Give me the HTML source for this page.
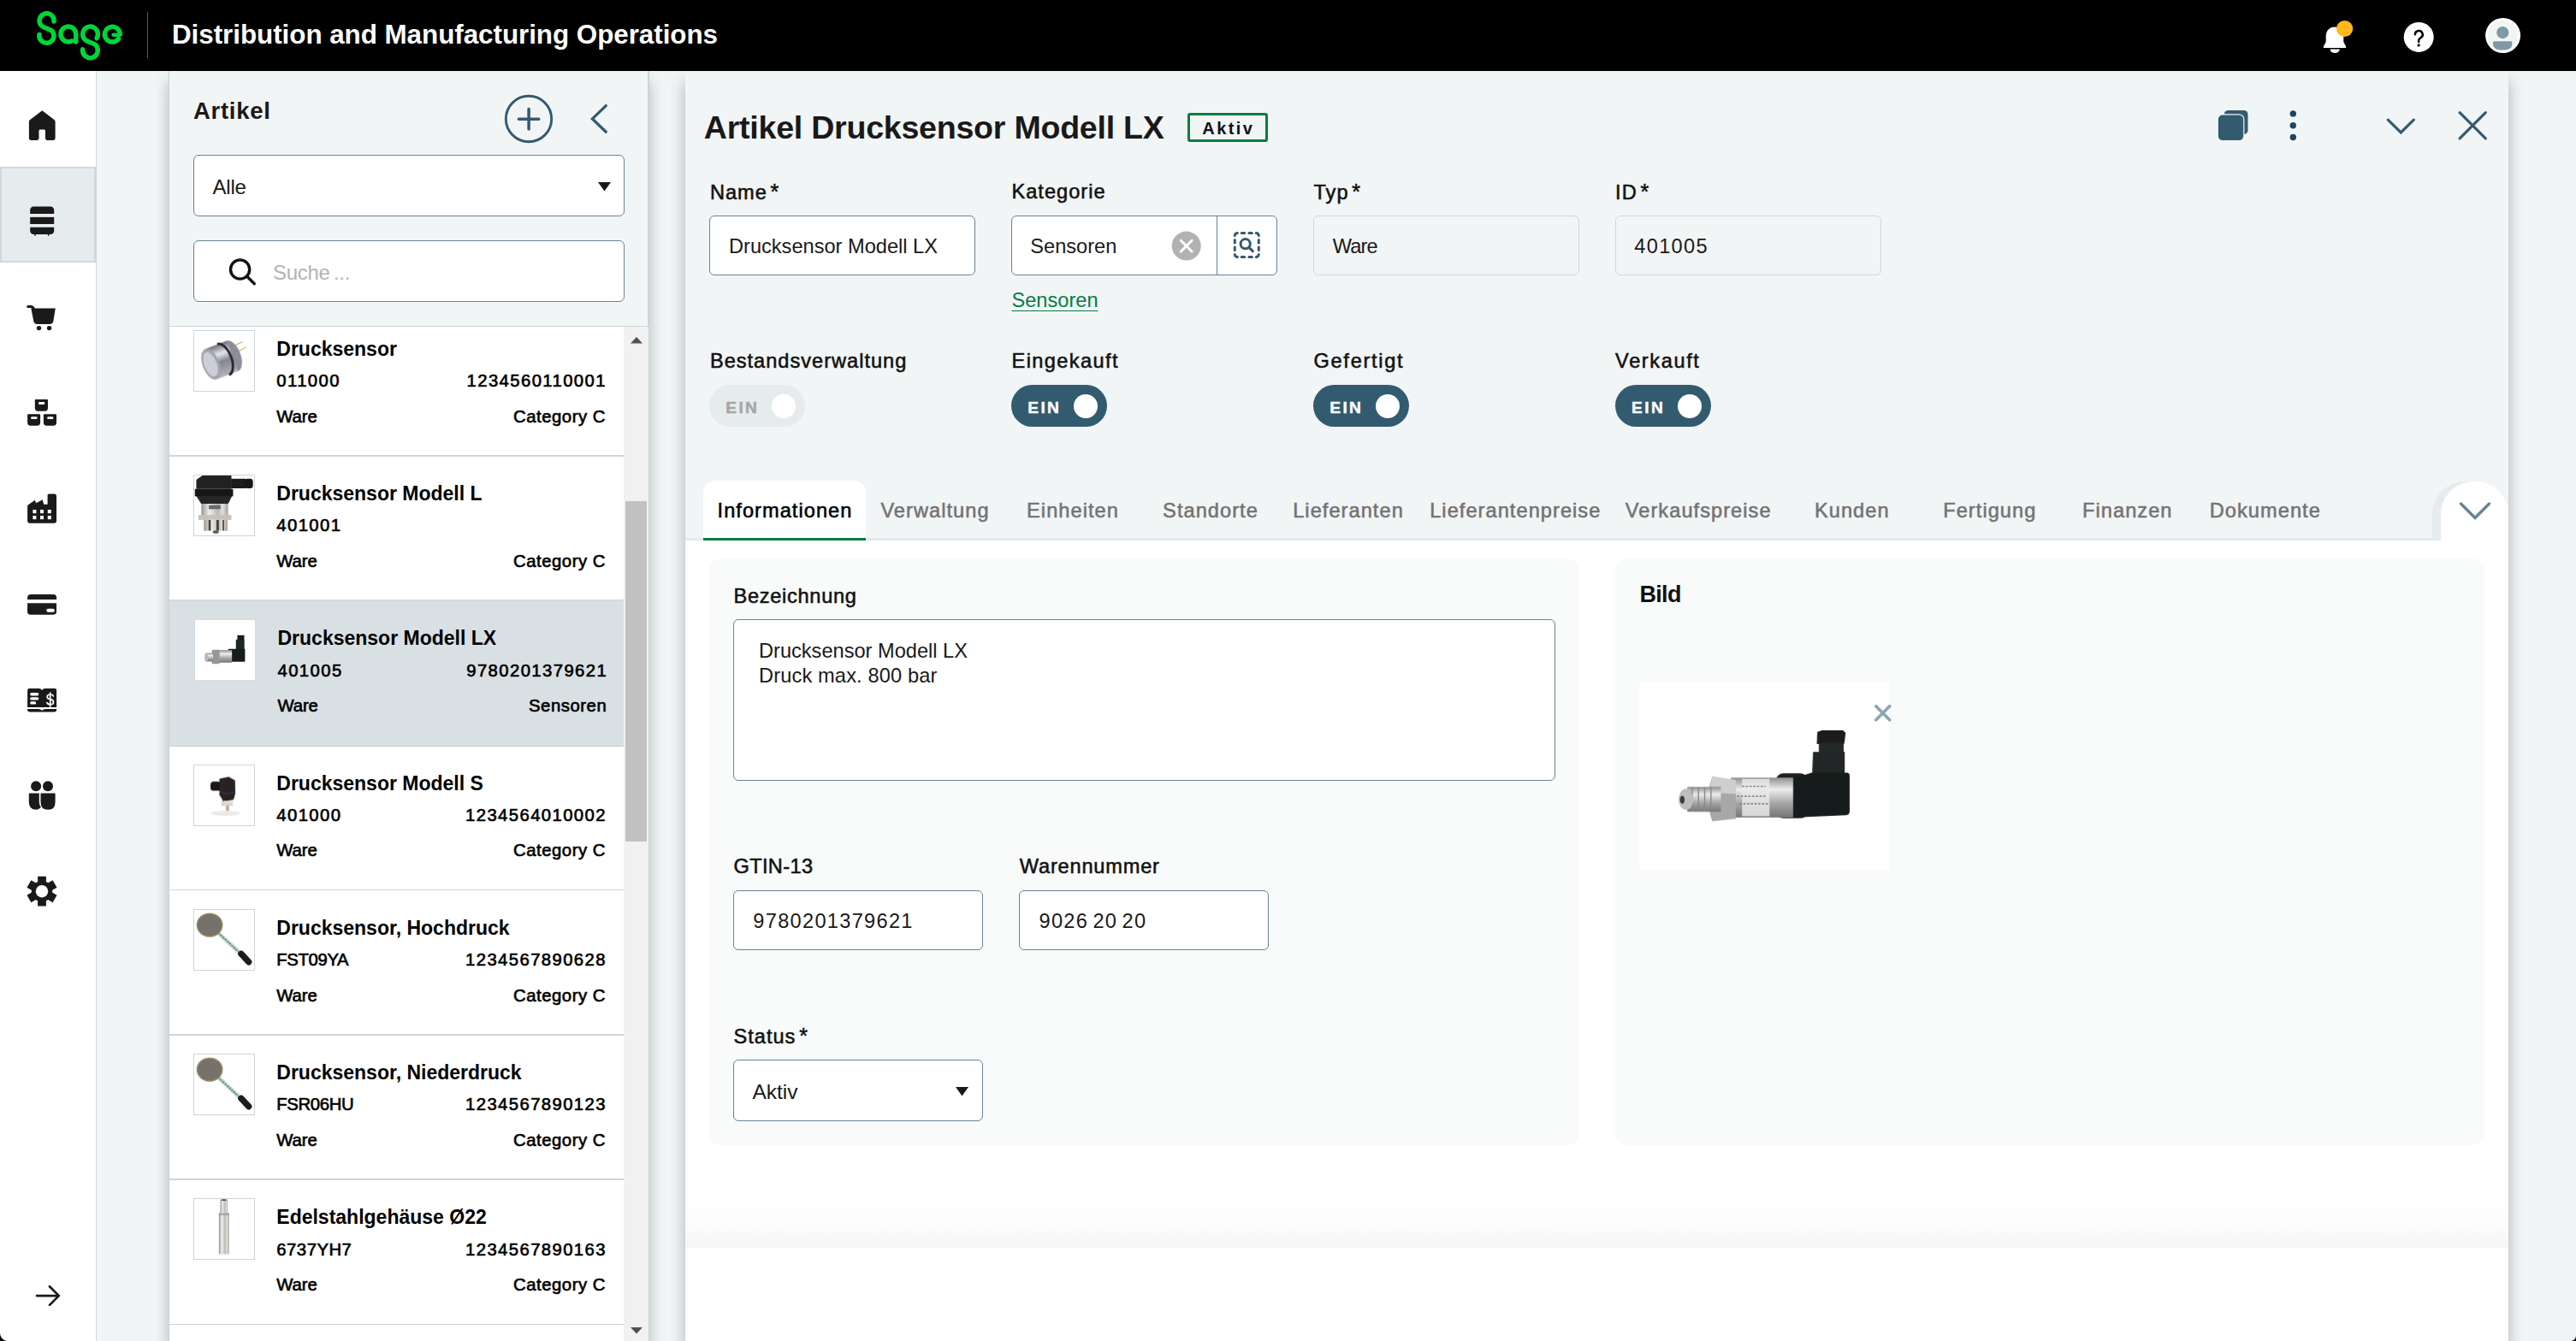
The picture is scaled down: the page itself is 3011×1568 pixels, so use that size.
<!DOCTYPE html>
<html lang="de"><head><meta charset="utf-8"><title>Artikel Drucksensor Modell LX</title>
<style>
html,body{margin:0;padding:0;}
body{width:3011px;height:1568px;overflow:hidden;background:#f2f5f6;position:relative;font-family:"Liberation Sans",sans-serif;}
.b{position:absolute;box-sizing:border-box;}
.t{position:absolute;white-space:pre;}
.inp{background:#fff;border:1.4px solid #668494;border-radius:6px;}
.dis{background:#f2f5f6;border:1.4px solid #ccd6db;border-radius:6px;}
.panel{box-shadow:0 12px 17px rgba(0,20,29,0.3);}
</style></head>
<body>
<svg width="0" height="0" style="position:absolute"><defs>
<linearGradient id="gm" x1="0" y1="0" x2="0" y2="1"><stop offset="0" stop-color="#6e6e79"/><stop offset=".3" stop-color="#e4e4ea"/><stop offset=".55" stop-color="#85858f"/><stop offset="1" stop-color="#b4b4be"/></linearGradient>
<linearGradient id="gs" x1="0" y1="0" x2="1" y2="0"><stop offset="0" stop-color="#9a9792"/><stop offset=".3" stop-color="#efeeec"/><stop offset=".62" stop-color="#bcb9b4"/><stop offset=".8" stop-color="#e3e1de"/><stop offset="1" stop-color="#a19e99"/></linearGradient>
<linearGradient id="gv" x1="0" y1="0" x2="0" y2="1"><stop offset="0" stop-color="#8f8f8f"/><stop offset=".3" stop-color="#ededed"/><stop offset=".65" stop-color="#a5a5a5"/><stop offset="1" stop-color="#777"/></linearGradient>
<filter id="bl"><feGaussianBlur stdDeviation="6"/></filter><filter id="bl2"><feGaussianBlur stdDeviation="1.2"/></filter>
</defs></svg>
<div class="b " style="left:0.00px;top:83.00px;width:113.00px;height:1485.00px;background:#fff;border-right:1.4px solid #ccd6db;"></div>
<div class="b " style="left:0.00px;top:195.00px;width:112.30px;height:112.00px;background:#e6ebed;border:2px solid #cfd8dd;"></div>
<div class="b panel" style="left:198.00px;top:83.00px;width:560.00px;height:1485.00px;background:#f2f5f6;"></div>
<div class="b " style="left:197.20px;top:83.00px;width:1.20px;height:1485.00px;background:#c9d2d8;"></div>
<div class="b " style="left:757.40px;top:83.00px;width:1.20px;height:1485.00px;background:#ccd4da;"></div>
<div class="b " style="left:198.00px;top:381.00px;width:560.00px;height:1187.00px;background:#fff;border-top:1.4px solid #ccd6db;"></div>
<div class="t" style="top:115.72px;font-size:27.5px;line-height:27.5px;color:#191919;font-weight:bold;letter-spacing:0.7px;left:226.00px;">Artikel</div>
<div class="b inp" style="left:226.00px;top:181.00px;width:504.00px;height:72.00px;"></div>
<div class="t" style="top:206.68px;font-size:24px;line-height:24px;color:#191919;letter-spacing:-0.2px;left:248.50px;">Alle</div>
<svg class="b" style="left:698.5px;top:212.5px" width="15" height="11" viewBox="0 0 15 11"><path d="M0 0H15L7.5 10.5Z" fill="#191919"/></svg>
<div class="b inp" style="left:226.00px;top:281.00px;width:504.00px;height:72.00px;"></div>
<div class="t" style="top:307.18px;font-size:24px;line-height:24px;color:#b3b3b3;letter-spacing:-0.3px;left:319.00px;word-spacing:-2px;">Suche ...</div>
<div class="b" style="left:198px;top:382.4px;width:531px;height:1186px;overflow:hidden;">
<div class="b " style="left:0.00px;top:149.80px;width:531.00px;height:1.40px;background:#ccd6db;"></div>
<div class="b th" style="left:28.00px;top:3.60px;width:72.00px;height:72.00px;background:#fff;overflow:hidden;border:1.2px solid #ccd6db;"><svg width="69.600" height="69.600" viewBox="93 92 1067 1068" style="display:block"><g transform="rotate(-21 570 620)" filter="url(#bl)">
<line x1="830" y1="470" x2="1050" y2="445" stroke="#c9a24a" stroke-width="16"/><line x1="830" y1="600" x2="1075" y2="560" stroke="#c9a24a" stroke-width="16"/>
<ellipse cx="790" cy="620" rx="150" ry="290" fill="#8d8d97"/>
<rect x="380" y="330" width="410" height="580" fill="url(#gm)"/>
<path d="M615 326A150 294 0 0 1 615 914" fill="none" stroke="#23262a" stroke-width="46"/>
<ellipse cx="380" cy="620" rx="150" ry="290" fill="#a4a4ae"/><ellipse cx="372" cy="620" rx="112" ry="228" fill="#cdced8"/>
</g></svg></div>
<div class="t" style="top:14.33px;font-size:23px;line-height:23px;color:#000;font-weight:bold;left:125.30px;">Drucksensor</div>
<div class="t" style="top:52.62px;font-size:20.3px;line-height:20.3px;color:#000;letter-spacing:1.4px;-webkit-text-stroke:0.65px #000;left:125.30px;">011000</div>
<div class="t" style="top:94.22px;font-size:20.3px;line-height:20.3px;color:#000;letter-spacing:-0.1px;-webkit-text-stroke:0.65px #000;left:125.30px;">Ware</div>
<div class="t" style="top:52.62px;font-size:20.3px;line-height:20.3px;color:#000;letter-spacing:1.4px;-webkit-text-stroke:0.65px #000;right:20.10px;text-align:right;">1234560110001</div>
<div class="t" style="top:94.22px;font-size:20.3px;line-height:20.3px;color:#000;letter-spacing:0.55px;-webkit-text-stroke:0.65px #000;right:20.95px;text-align:right;">Category C</div>
<div class="b " style="left:0.00px;top:319.10px;width:531.00px;height:1.40px;background:#ccd6db;"></div>
<div class="b th" style="left:28.00px;top:172.90px;width:72.00px;height:72.00px;background:#fff;overflow:hidden;border:1.2px solid #ccd6db;"><svg width="69.600" height="69.600" viewBox="93 92 1067 1068" style="display:block"><g filter="url(#bl)">
<path d="M130 170L240 92H760V335H130Z" fill="#202020"/><rect x="755" y="150" width="260" height="172" fill="#1b1b1b"/><rect x="1000" y="148" width="146" height="176" rx="50" fill="#131313"/>
<rect x="105" y="335" width="685" height="130" fill="#161616"/><path d="M130 460H772L700 602H220Z" fill="#252525"/>
<rect x="220" y="600" width="480" height="205" fill="url(#gs)"/><rect x="355" y="625" width="210" height="70" fill="#6a6a6a"/>
<rect x="170" y="800" width="590" height="88" fill="#c7c1b8"/>
<rect x="265" y="885" width="425" height="200" fill="url(#gs)"/><rect x="350" y="890" width="40" height="190" fill="#4a433e"/><rect x="490" y="890" width="45" height="190" fill="#4a433e"/><rect x="600" y="890" width="30" height="190" fill="#5a534e"/>
<ellipse cx="480" cy="1105" rx="55" ry="28" fill="#5a5552"/></g></svg></div>
<div class="t" style="top:183.63px;font-size:23px;line-height:23px;color:#000;font-weight:bold;left:125.30px;">Drucksensor Modell L</div>
<div class="t" style="top:221.92px;font-size:20.3px;line-height:20.3px;color:#000;letter-spacing:1.4px;-webkit-text-stroke:0.65px #000;left:125.30px;">401001</div>
<div class="t" style="top:263.52px;font-size:20.3px;line-height:20.3px;color:#000;letter-spacing:-0.1px;-webkit-text-stroke:0.65px #000;left:125.30px;">Ware</div>
<div class="t" style="top:263.52px;font-size:20.3px;line-height:20.3px;color:#000;letter-spacing:0.55px;-webkit-text-stroke:0.65px #000;right:20.95px;text-align:right;">Category C</div>
<div class="b " style="left:0.00px;top:320.10px;width:531.00px;height:170.30px;background:#d9e0e4;border-bottom:1.4px solid #c4cfd5;"></div>
<div class="b th" style="left:29.20px;top:342.10px;width:72.00px;height:72.00px;background:#fff;overflow:hidden;border:1.2px solid #d3dbe0;"><svg width="69.600" height="69.600" viewBox="112 68 1053 1054" style="display:block"><g filter="url(#bl)">
<rect x="860" y="335" width="122" height="95" rx="10" fill="#1a1f1e"/><rect x="835" y="415" width="150" height="215" fill="#1f2726"/>
<rect x="700" y="580" width="296" height="228" rx="12" fill="#181d1c"/>
<rect x="530" y="600" width="235" height="222" fill="url(#gv)"/>
<rect x="410" y="595" width="135" height="248" rx="14" fill="#97979a"/>
<rect x="300" y="652" width="130" height="150" fill="url(#gv)"/><ellipse cx="312" cy="727" rx="32" ry="72" fill="#b9b9bd"/></g></svg></div>
<div class="t" style="top:352.83px;font-size:23px;line-height:23px;color:#000;font-weight:bold;left:126.50px;">Drucksensor Modell LX</div>
<div class="t" style="top:391.12px;font-size:20.3px;line-height:20.3px;color:#000;letter-spacing:1.4px;-webkit-text-stroke:0.65px #000;left:126.50px;">401005</div>
<div class="t" style="top:432.72px;font-size:20.3px;line-height:20.3px;color:#000;letter-spacing:-0.1px;-webkit-text-stroke:0.65px #000;left:126.50px;">Ware</div>
<div class="t" style="top:391.12px;font-size:20.3px;line-height:20.3px;color:#000;letter-spacing:1.4px;-webkit-text-stroke:0.65px #000;right:18.90px;text-align:right;">9780201379621</div>
<div class="t" style="top:432.72px;font-size:20.3px;line-height:20.3px;color:#000;letter-spacing:0.55px;-webkit-text-stroke:0.65px #000;right:19.75px;text-align:right;">Sensoren</div>
<div class="b " style="left:0.00px;top:657.60px;width:531.00px;height:1.40px;background:#ccd6db;"></div>
<div class="b th" style="left:28.00px;top:511.40px;width:72.00px;height:72.00px;background:#fff;overflow:hidden;border:1.2px solid #ccd6db;"><svg width="69.600" height="69.600" viewBox="93 92 1067 1068" style="display:block"><g filter="url(#bl)">
<ellipse cx="650" cy="950" rx="260" ry="45" fill="#b39d92" opacity=".22"/>
<rect x="582" y="690" width="205" height="130" fill="#ddd6ce"/><rect x="662" y="815" width="56" height="92" fill="#b8a9a0"/>
<rect x="385" y="382" width="190" height="165" rx="60" fill="#1c1817"/>
<path d="M545 330L712 296L826 362L830 600L800 702L622 742L545 622Z" fill="#2a2422"/>
<path d="M545 545Q640 625 826 578" fill="none" stroke="#2746b0" stroke-width="9"/>
<rect x="625" y="725" width="150" height="30" fill="#e8e4e0"/></g></svg></div>
<div class="t" style="top:522.13px;font-size:23px;line-height:23px;color:#000;font-weight:bold;left:125.30px;">Drucksensor Modell S</div>
<div class="t" style="top:560.42px;font-size:20.3px;line-height:20.3px;color:#000;letter-spacing:1.4px;-webkit-text-stroke:0.65px #000;left:125.30px;">401000</div>
<div class="t" style="top:602.02px;font-size:20.3px;line-height:20.3px;color:#000;letter-spacing:-0.1px;-webkit-text-stroke:0.65px #000;left:125.30px;">Ware</div>
<div class="t" style="top:560.42px;font-size:20.3px;line-height:20.3px;color:#000;letter-spacing:1.4px;-webkit-text-stroke:0.65px #000;right:20.10px;text-align:right;">1234564010002</div>
<div class="t" style="top:602.02px;font-size:20.3px;line-height:20.3px;color:#000;letter-spacing:0.55px;-webkit-text-stroke:0.65px #000;right:20.95px;text-align:right;">Category C</div>
<div class="b " style="left:0.00px;top:826.80px;width:531.00px;height:1.40px;background:#ccd6db;"></div>
<div class="b th" style="left:28.00px;top:680.60px;width:72.00px;height:72.00px;background:#fff;overflow:hidden;border:1.2px solid #ccd6db;"><svg width="69.600" height="69.600" viewBox="93 92 1067 1068" style="display:block"><g filter="url(#bl)">
<line x1="520" y1="500" x2="935" y2="885" stroke="#bfe0d7" stroke-width="78"/><line x1="520" y1="500" x2="905" y2="858" stroke="#6b6b66" stroke-width="22" stroke-dasharray="40 14"/>
<ellipse cx="370" cy="362" rx="228" ry="208" fill="#75726c" stroke="#a69466" stroke-width="20"/>
<line x1="935" y1="880" x2="1070" y2="1025" stroke="#1b1b1b" stroke-width="112" stroke-linecap="round"/></g></svg></div>
<div class="t" style="top:691.33px;font-size:23px;line-height:23px;color:#000;font-weight:bold;left:125.30px;">Drucksensor, Hochdruck</div>
<div class="t" style="top:729.62px;font-size:20.3px;line-height:20.3px;color:#000;letter-spacing:-0.35px;-webkit-text-stroke:0.65px #000;left:125.30px;">FST09YA</div>
<div class="t" style="top:771.22px;font-size:20.3px;line-height:20.3px;color:#000;letter-spacing:-0.1px;-webkit-text-stroke:0.65px #000;left:125.30px;">Ware</div>
<div class="t" style="top:729.62px;font-size:20.3px;line-height:20.3px;color:#000;letter-spacing:1.4px;-webkit-text-stroke:0.65px #000;right:20.10px;text-align:right;">1234567890628</div>
<div class="t" style="top:771.22px;font-size:20.3px;line-height:20.3px;color:#000;letter-spacing:0.55px;-webkit-text-stroke:0.65px #000;right:20.95px;text-align:right;">Category C</div>
<div class="b " style="left:0.00px;top:996.10px;width:531.00px;height:1.40px;background:#ccd6db;"></div>
<div class="b th" style="left:28.00px;top:849.90px;width:72.00px;height:72.00px;background:#fff;overflow:hidden;border:1.2px solid #ccd6db;"><svg width="69.600" height="69.600" viewBox="93 92 1067 1068" style="display:block"><g filter="url(#bl)">
<line x1="520" y1="500" x2="935" y2="885" stroke="#bfe0d7" stroke-width="78"/><line x1="520" y1="500" x2="905" y2="858" stroke="#6b6b66" stroke-width="22" stroke-dasharray="40 14"/>
<ellipse cx="370" cy="362" rx="228" ry="208" fill="#75726c" stroke="#a69466" stroke-width="20"/>
<line x1="935" y1="880" x2="1070" y2="1025" stroke="#1b1b1b" stroke-width="112" stroke-linecap="round"/></g></svg></div>
<div class="t" style="top:860.63px;font-size:23px;line-height:23px;color:#000;font-weight:bold;left:125.30px;">Drucksensor, Niederdruck</div>
<div class="t" style="top:898.92px;font-size:20.3px;line-height:20.3px;color:#000;letter-spacing:-0.35px;-webkit-text-stroke:0.65px #000;left:125.30px;">FSR06HU</div>
<div class="t" style="top:940.52px;font-size:20.3px;line-height:20.3px;color:#000;letter-spacing:-0.1px;-webkit-text-stroke:0.65px #000;left:125.30px;">Ware</div>
<div class="t" style="top:898.92px;font-size:20.3px;line-height:20.3px;color:#000;letter-spacing:1.4px;-webkit-text-stroke:0.65px #000;right:20.10px;text-align:right;">1234567890123</div>
<div class="t" style="top:940.52px;font-size:20.3px;line-height:20.3px;color:#000;letter-spacing:0.55px;-webkit-text-stroke:0.65px #000;right:20.95px;text-align:right;">Category C</div>
<div class="b " style="left:0.00px;top:1165.30px;width:531.00px;height:1.40px;background:#ccd6db;"></div>
<div class="b th" style="left:28.00px;top:1019.10px;width:72.00px;height:72.00px;background:#fff;overflow:hidden;border:1.2px solid #ccd6db;"><svg width="69.600" height="69.600" viewBox="93 92 1067 1068" style="display:block"><g filter="url(#bl)">
<rect x="560" y="100" width="132" height="255" fill="url(#gs)"/><ellipse cx="626" cy="108" rx="50" ry="14" fill="#3b3b3b"/>
<rect x="535" y="345" width="182" height="735" rx="8" fill="url(#gs)"/><rect x="535" y="345" width="182" height="40" fill="#8b8580" opacity=".55"/></g></svg></div>
<div class="t" style="top:1029.83px;font-size:23px;line-height:23px;color:#000;font-weight:bold;left:125.30px;">Edelstahlgehäuse Ø22</div>
<div class="t" style="top:1068.12px;font-size:20.3px;line-height:20.3px;color:#000;letter-spacing:0.5px;-webkit-text-stroke:0.65px #000;left:125.30px;">6737YH7</div>
<div class="t" style="top:1109.72px;font-size:20.3px;line-height:20.3px;color:#000;letter-spacing:-0.1px;-webkit-text-stroke:0.65px #000;left:125.30px;">Ware</div>
<div class="t" style="top:1068.12px;font-size:20.3px;line-height:20.3px;color:#000;letter-spacing:1.4px;-webkit-text-stroke:0.65px #000;right:20.10px;text-align:right;">1234567890163</div>
<div class="t" style="top:1109.72px;font-size:20.3px;line-height:20.3px;color:#000;letter-spacing:0.55px;-webkit-text-stroke:0.65px #000;right:20.95px;text-align:right;">Category C</div>
<div class="b " style="left:0.00px;top:1334.60px;width:531.00px;height:1.40px;background:#ccd6db;"></div>
</div>
<div class="b " style="left:729.20px;top:382.40px;width:28.80px;height:1185.60px;background:#f1f1f1;"></div>
<div class="b " style="left:731.20px;top:586.00px;width:24.80px;height:398.00px;background:#c1c1c1;"></div>
<svg class="b" style="left:737px;top:394px" width="14" height="8" viewBox="0 0 14 8"><path d="M0 7.5L7 0L14 7.5Z" fill="#505050"/></svg>
<svg class="b" style="left:737px;top:1551.5px" width="14" height="8" viewBox="0 0 14 8"><path d="M0 0H14L7 7.5Z" fill="#505050"/></svg>
<div class="b panel" style="left:801.00px;top:83.00px;width:2131.00px;height:1485.00px;background:#fff;"></div>
<div class="b " style="left:801.00px;top:83.00px;width:2131.00px;height:549.00px;background:#f2f5f6;border-bottom:3.6px solid #e4e8eb;"></div>
<div class="t" style="top:130.77px;font-size:37.6px;line-height:37.6px;color:#191919;font-weight:bold;letter-spacing:-0.25px;left:822.80px;">Artikel Drucksensor Modell LX</div>
<div class="b " style="left:1388.30px;top:132.40px;width:94.00px;height:33.60px;border:3px solid #007e42;border-radius:3px;"></div>
<div class="t" style="top:140.37px;font-size:20px;line-height:20px;color:#111;font-weight:bold;letter-spacing:2.4px;left:1405.30px;">Aktiv</div>
<div class="t" style="top:212.92px;font-size:23.6px;line-height:23.6px;color:#111;letter-spacing:1.0px;-webkit-text-stroke:0.55px #111;left:829.90px;">Name <span style="margin-left:-3.800px;font-size:25px;position:relative;top:0.500px">*</span></div>
<div class="t" style="top:212.92px;font-size:23.6px;line-height:23.6px;color:#111;letter-spacing:1.0px;-webkit-text-stroke:0.55px #111;left:1182.50px;">Kategorie</div>
<div class="t" style="top:212.92px;font-size:23.6px;line-height:23.6px;color:#111;letter-spacing:1.0px;-webkit-text-stroke:0.55px #111;left:1535.50px;">Typ <span style="margin-left:-3.800px;font-size:25px;position:relative;top:0.500px">*</span></div>
<div class="t" style="top:212.92px;font-size:23.6px;line-height:23.6px;color:#111;letter-spacing:1.0px;-webkit-text-stroke:0.55px #111;left:1888.10px;">ID <span style="margin-left:-3.800px;font-size:25px;position:relative;top:0.500px">*</span></div>
<div class="b inp" style="left:829.30px;top:252.40px;width:310.60px;height:69.60px;"></div>
<div class="t" style="top:276.92px;font-size:23.6px;line-height:23.6px;color:#191919;left:852.00px;">Drucksensor Modell LX</div>
<div class="b inp" style="left:1182.30px;top:252.40px;width:310.60px;height:69.60px;"></div>
<div class="b " style="left:1422.00px;top:253.00px;width:1.40px;height:68.40px;background:#668494;"></div>
<div class="t" style="top:276.92px;font-size:23.6px;line-height:23.6px;color:#191919;left:1204.30px;">Sensoren</div>
<div class="b dis" style="left:1535.30px;top:252.40px;width:310.60px;height:69.60px;"></div>
<div class="t" style="top:276.92px;font-size:23.6px;line-height:23.6px;color:#191919;letter-spacing:-0.9px;left:1557.80px;">Ware</div>
<div class="b dis" style="left:1888.00px;top:252.40px;width:310.60px;height:69.60px;"></div>
<div class="t" style="top:276.92px;font-size:23.6px;line-height:23.6px;color:#191919;letter-spacing:1.3px;left:1910.30px;">401005</div>
<div class="t" style="top:340.42px;font-size:23.6px;line-height:23.6px;color:#007e45;left:1182.50px;text-decoration:underline;text-underline-offset:4px;text-decoration-thickness:1.2px;">Sensoren</div>
<div class="t" style="top:411.42px;font-size:23.6px;line-height:23.6px;color:#111;letter-spacing:1.0px;-webkit-text-stroke:0.55px #111;left:829.90px;">Bestandsverwaltung</div>
<div class="t" style="top:411.42px;font-size:23.6px;line-height:23.6px;color:#111;letter-spacing:1.4px;-webkit-text-stroke:0.55px #111;left:1182.50px;">Eingekauft</div>
<div class="t" style="top:411.42px;font-size:23.6px;line-height:23.6px;color:#111;letter-spacing:1.7px;-webkit-text-stroke:0.55px #111;left:1535.50px;">Gefertigt</div>
<div class="t" style="top:411.42px;font-size:23.6px;line-height:23.6px;color:#111;letter-spacing:1.6px;-webkit-text-stroke:0.55px #111;left:1888.10px;">Verkauft</div>
<div class="b " style="left:829.20px;top:450.00px;width:112.00px;height:49.00px;background:#e6ebed;border-radius:25px;"></div>
<div class="t" style="top:466.95px;font-size:19.2px;line-height:19.2px;color:#a6a6a6;font-weight:bold;letter-spacing:2.4px;-webkit-text-stroke:0.45px #a6a6a6;left:848.20px;">EIN</div>
<div class="b " style="left:901.80px;top:461.00px;width:28.20px;height:28.20px;background:#fff;border-radius:50%;"></div>
<div class="b " style="left:1182.20px;top:450.00px;width:112.00px;height:49.00px;background:#335b70;border-radius:25px;"></div>
<div class="t" style="top:466.95px;font-size:19.2px;line-height:19.2px;color:#fff;font-weight:bold;letter-spacing:2.4px;-webkit-text-stroke:0.45px #fff;left:1201.20px;">EIN</div>
<div class="b " style="left:1254.80px;top:461.00px;width:28.20px;height:28.20px;background:#fff;border-radius:50%;"></div>
<div class="b " style="left:1535.20px;top:450.00px;width:112.00px;height:49.00px;background:#335b70;border-radius:25px;"></div>
<div class="t" style="top:466.95px;font-size:19.2px;line-height:19.2px;color:#fff;font-weight:bold;letter-spacing:2.4px;-webkit-text-stroke:0.45px #fff;left:1554.20px;">EIN</div>
<div class="b " style="left:1607.80px;top:461.00px;width:28.20px;height:28.20px;background:#fff;border-radius:50%;"></div>
<div class="b " style="left:1888.00px;top:450.00px;width:112.00px;height:49.00px;background:#335b70;border-radius:25px;"></div>
<div class="t" style="top:466.95px;font-size:19.2px;line-height:19.2px;color:#fff;font-weight:bold;letter-spacing:2.4px;-webkit-text-stroke:0.45px #fff;left:1907.00px;">EIN</div>
<div class="b " style="left:1960.60px;top:461.00px;width:28.20px;height:28.20px;background:#fff;border-radius:50%;"></div>
<div class="b " style="left:822.00px;top:562.20px;width:190.00px;height:70.00px;background:#fff;border-radius:13px 13px 0 0;border-bottom:3.4px solid #007e42;"></div>
<div class="t" style="left:822px;width:190px;text-align:center;top:586.02px;font-size:23.6px;line-height:23.6px;color:#000;letter-spacing:1.05px;-webkit-text-stroke:0.55px #000;padding-left:1px;box-sizing:border-box;">Informationen</div>
<div class="t" style="left:1012px;width:161px;text-align:center;top:586.02px;font-size:23.6px;line-height:23.6px;color:#737373;letter-spacing:1.05px;-webkit-text-stroke:0.55px #737373;padding-left:1px;box-sizing:border-box;">Verwaltung</div>
<div class="t" style="left:1173px;width:161px;text-align:center;top:586.02px;font-size:23.6px;line-height:23.6px;color:#737373;letter-spacing:1.05px;-webkit-text-stroke:0.55px #737373;padding-left:1px;box-sizing:border-box;">Einheiten</div>
<div class="t" style="left:1334px;width:161px;text-align:center;top:586.02px;font-size:23.6px;line-height:23.6px;color:#737373;letter-spacing:1.05px;-webkit-text-stroke:0.55px #737373;padding-left:1px;box-sizing:border-box;">Standorte</div>
<div class="t" style="left:1495px;width:161px;text-align:center;top:586.02px;font-size:23.6px;line-height:23.6px;color:#737373;letter-spacing:1.05px;-webkit-text-stroke:0.55px #737373;padding-left:1px;box-sizing:border-box;">Lieferanten</div>
<div class="t" style="left:1656px;width:229.6px;text-align:center;top:586.02px;font-size:23.6px;line-height:23.6px;color:#737373;letter-spacing:1.05px;-webkit-text-stroke:0.55px #737373;padding-left:1px;box-sizing:border-box;">Lieferantenpreise</div>
<div class="t" style="left:1885.6px;width:198.2px;text-align:center;top:586.02px;font-size:23.6px;line-height:23.6px;color:#737373;letter-spacing:1.05px;-webkit-text-stroke:0.55px #737373;padding-left:1px;box-sizing:border-box;">Verkaufspreise</div>
<div class="t" style="left:2083.8px;width:161px;text-align:center;top:586.02px;font-size:23.6px;line-height:23.6px;color:#737373;letter-spacing:1.05px;-webkit-text-stroke:0.55px #737373;padding-left:1px;box-sizing:border-box;">Kunden</div>
<div class="t" style="left:2244.8px;width:161px;text-align:center;top:586.02px;font-size:23.6px;line-height:23.6px;color:#737373;letter-spacing:1.05px;-webkit-text-stroke:0.55px #737373;padding-left:1px;box-sizing:border-box;">Fertigung</div>
<div class="t" style="left:2405.8px;width:161px;text-align:center;top:586.02px;font-size:23.6px;line-height:23.6px;color:#737373;letter-spacing:1.05px;-webkit-text-stroke:0.55px #737373;padding-left:1px;box-sizing:border-box;">Finanzen</div>
<div class="t" style="left:2566.8px;width:161px;text-align:center;top:586.02px;font-size:23.6px;line-height:23.6px;color:#737373;letter-spacing:1.05px;-webkit-text-stroke:0.55px #737373;padding-left:1px;box-sizing:border-box;">Dokumente</div>
<div class="b " style="left:2842.50px;top:562.80px;width:84.00px;height:69.00px;background:#e6ebed;border-radius:38px 38px 0 0;"></div>
<div class="b " style="left:2853.30px;top:562.80px;width:78.70px;height:69.00px;background:#fff;border-radius:38px 38px 0 0;"></div>
<svg class="b" style="left:2872px;top:584px" width="42" height="28" viewBox="0 0 42 28"><path d="M4.5 5L21 21.5L37.5 5" fill="none" stroke="#668494" stroke-width="3.4" stroke-linecap="round" stroke-linejoin="miter"/></svg>
<div class="b " style="left:828.70px;top:653.00px;width:1017.00px;height:686.00px;background:#f9fbfb;border-radius:14px;"></div>
<div class="b " style="left:1888.10px;top:653.00px;width:1016.00px;height:686.00px;background:#f9fbfb;border-radius:14px;"></div>
<div class="t" style="top:686.42px;font-size:23.6px;line-height:23.6px;color:#111;letter-spacing:0.7px;-webkit-text-stroke:0.55px #111;left:857.50px;">Bezeichnung</div>
<div class="b inp" style="left:857.30px;top:724.40px;width:960.40px;height:188.60px;"></div>
<div class="t" style="top:749.62px;font-size:23.6px;line-height:23.6px;color:#191919;left:887.00px;">Drucksensor Modell LX</div>
<div class="t" style="top:778.72px;font-size:23.6px;line-height:23.6px;color:#191919;letter-spacing:0.15px;left:887.00px;">Druck max. 800 bar</div>
<div class="t" style="top:1002.02px;font-size:23.6px;line-height:23.6px;color:#111;letter-spacing:0.35px;-webkit-text-stroke:0.55px #111;left:857.50px;">GTIN-13</div>
<div class="t" style="top:1002.02px;font-size:23.6px;line-height:23.6px;color:#111;letter-spacing:0.8px;-webkit-text-stroke:0.55px #111;left:1191.80px;">Warennummer</div>
<div class="b inp" style="left:857.30px;top:1041.00px;width:291.60px;height:69.60px;"></div>
<div class="t" style="top:1065.72px;font-size:23.6px;line-height:23.6px;color:#191919;letter-spacing:1.3px;left:880.30px;">9780201379621</div>
<div class="b inp" style="left:1191.30px;top:1041.00px;width:291.60px;height:69.60px;"></div>
<div class="t" style="top:1065.72px;font-size:23.6px;line-height:23.6px;color:#191919;letter-spacing:1.3px;left:1214.50px;word-spacing:-2.6px;">9026 20 20</div>
<div class="t" style="top:1199.82px;font-size:23.6px;line-height:23.6px;color:#111;letter-spacing:1.0px;-webkit-text-stroke:0.55px #111;left:857.50px;">Status <span style="margin-left:-3.800px;font-size:25px;position:relative;top:0.500px">*</span></div>
<div class="b inp" style="left:857.30px;top:1239.30px;width:291.60px;height:71.40px;"></div>
<div class="t" style="top:1264.76px;font-size:24.5px;line-height:24.5px;color:#191919;left:879.40px;">Aktiv</div>
<svg class="b" style="left:1117.2px;top:1270.5px" width="15" height="11" viewBox="0 0 15 11"><path d="M0 0H15L7.5 10.5Z" fill="#191919"/></svg>
<div class="t" style="top:681.94px;font-size:27px;line-height:27px;color:#111;font-weight:bold;letter-spacing:-0.7px;left:1916.50px;">Bild</div>
<div class="b " style="left:1916.00px;top:798.00px;width:292.00px;height:219.00px;background:#fff;"></div>
<svg class="b" style="left:1916px;top:798px" width="292" height="219" viewBox="467 543 1003 752"><g filter="url(#bl2)">
<path d="M1182 742L1200 735H1285L1296 745L1290 790H1180Z" fill="#1b1f1f"/><rect x="1188" y="785" width="100" height="45" fill="#232928"/>
<path d="M1165 822H1292V935H1160Z" fill="#222827"/>
<rect x="1015" y="908" width="130" height="180" rx="30" fill="#1c2120"/><path d="M1080 930L1160 905H1300Q1312 905 1312 918V1060Q1312 1075 1298 1076L1080 1085Z" fill="#171b1a"/>
<rect x="835" y="925" width="250" height="160" fill="url(#gv)"/><rect x="880" y="930" width="110" height="150" fill="#e9e9e9" opacity=".85"/>
<path d="M860 1000H980M870 1030H990M880 960H975" stroke="#777" stroke-width="5" stroke-dasharray="9 6"/>
<path d="M760 920L855 935V1090L760 1100L735 1010Z" fill="#a7a7a7"/><path d="M760 920L855 935V990L748 985Z" fill="#cfcfcf"/>
<rect x="660" y="962" width="135" height="100" fill="url(#gv)"/><path d="M680 965V1060M705 965V1060M730 965V1060M755 965V1060" stroke="#8a8a8a" stroke-width="5"/>
<ellipse cx="655" cy="1012" rx="30" ry="42" fill="#bdbdbd"/><ellipse cx="640" cy="1014" rx="9" ry="16" fill="#3a3a3a"/>
</g></svg>
<div class="b " style="left:801.00px;top:1404.00px;width:2131.00px;height:55.00px;background:linear-gradient(to bottom,rgba(0,0,0,0) 0%,rgba(0,0,0,0.012) 50%,rgba(0,0,0,0.04) 100%);"></div>
<div class="b " style="left:801.00px;top:1459.00px;width:2131.00px;height:109.00px;background:#fff;"></div>
<div class="b " style="left:0.00px;top:0.00px;width:3011.00px;height:83.00px;background:#000;"></div>
<div class="b " style="left:172.00px;top:14.00px;width:1.30px;height:54.00px;background:#595959;"></div>
<div class="t" style="top:24.62px;font-size:31.4px;line-height:31.4px;color:#fff;font-weight:bold;letter-spacing:-0.05px;left:201.00px;">Distribution and Manufacturing Operations</div>
<svg class="b" style="left:0;top:1556px" width="12" height="12" viewBox="0 0 12 12"><path d="M0 2.500A9.500 9.500 0 0 0 8 12H0Z" fill="#000"/></svg>
<svg class="b" style="left:3005px;top:1562px" width="6" height="6" viewBox="0 0 6 6"><path d="M6 0A6 6 0 0 1 0 6H6Z" fill="#000"/></svg>
<svg class="b" style="left:30.00px;top:0.00px;" width="200.00" height="84.00" viewBox="0 0 2576 1082"><g fill="none" stroke="#00d639" stroke-width="70" stroke-linecap="round" stroke-linejoin="round">
<path d="M426 322A110 110 0 1 0 232 382C262 420 372 440 400 470A110 110 0 1 1 205 520"/>
<path d="M695 616A115 115 0 1 1 757 515V632"/>
<path d="M1071 574A115 115 0 1 0 893 598C925 632 1030 650 1058 682A115 115 0 1 1 857 745"/>
<path d="M1420 515A115 115 0 1 0 1398 585"/><path d="M1322 525H1418" stroke-width="60"/>
</g></svg>
<svg class="b" style="left:2710.00px;top:20.00px;" width="44.00" height="46.00" viewBox="2710 20 44 46"><path d="M2729 31.5c-5.9 0-10.3 4.6-10.3 10.6v6.9l-2.9 5.4c-.4.8.1 1.6 1 1.6h24.4c.9 0 1.4-.8 1-1.6l-2.9-5.4v-6.9c0-6-4.4-10.600-10.3-10.600z" fill="#fff"/>
<path d="M2723.600 57.6h11.200a5.600 4.300 0 0 1-11.200 0z" fill="#fff"/>
<circle cx="2740.600" cy="33.5" r="9.600" fill="#ffb81c"/></svg>
<svg class="b" style="left:2805.00px;top:22.00px;" width="44.00" height="44.00" viewBox="2805 22 44 44"><circle cx="2827.200" cy="43.400" r="17.500" fill="#fff"/>
<path d="M2822.900 40.300a4.400 4.400 0 1 1 6.500 3.900c-1.600 .9-2.300 1.800-2.300 3.500v1.200" fill="none" stroke="#000" stroke-width="2.500" stroke-linecap="round"/>
<circle cx="2827.100" cy="52.900" r="1.700" fill="#000"/></svg>
<svg class="b" style="left:2902.00px;top:18.00px;" width="48.00" height="48.00" viewBox="2902 18 48 48"><circle cx="2925.600" cy="41.500" r="20.500" fill="#fff"/><circle cx="2925.600" cy="41.500" r="17.600" fill="#f2f5f6"/>
<circle cx="2925.300" cy="38.100" r="7.100" fill="#8099a6"/>
<path d="M2914 49.400q0-1.200 1.200-1.200h20q1.200 0 1.200 1.200v2c0 4.800-4.600 7.200-11.200 7.200s-11.200-2.400-11.200-7.200z" fill="#8099a6"/></svg>
<svg class="b" style="left:30.00px;top:126.00px;" width="40.00" height="42.00" viewBox="30 126 40 42"><path d="M49.300 129.300L63.300 140c.9.700 1.300 1.500 1.300 2.600v19c0 1.500-1 2.500-2.500 2.500h-6.600c-1.500 0-2.500-1-2.500-2.500v-8.500c0-.9-.6-1.500-1.500-1.500h-4.500c-.9 0-1.500.6-1.500 1.500v8.500c0 1.500-1 2.500-2.500 2.500h-6.600c-1.500 0-2.500-1-2.500-2.500v-19c0-1.100.4-1.900 1.300-2.600z" fill="#1a1a1a"/></svg>
<svg class="b" style="left:33.00px;top:239.00px;" width="34.00" height="40.00" viewBox="33 239 34 40"><path d="M39.200 241.500h20c2.200 0 4 1.800 4 4v4.400h-28v-4.400c0-2.200 1.800-4 4-4z" fill="#1a1a1a"/>
<rect x="35.200" y="253.900" width="28" height="8.100" fill="#1a1a1a"/>
<path d="M35.200 265.700h28v4.400c0 2.200-1.800 4-4 4h-20c-2.200 0-4-1.800-4-4z" fill="#1a1a1a"/>
<rect x="40.300" y="273.500" width="1.500" height="2.200" fill="#1a1a1a"/><rect x="55.900" y="273.500" width="1.500" height="2.200" fill="#1a1a1a"/></svg>
<svg class="b" style="left:28.00px;top:352.00px;" width="42.00" height="40.00" viewBox="28 352 42 40"><path d="M32.8 358.5h3.0c2 0 3 1 3.500 2.800l3.8 13.4" fill="none" stroke="#1a1a1a" stroke-width="3.200" stroke-linecap="round" stroke-linejoin="round"/>
<path d="M36.4 360.4L64.8 360.4L62.4 375.2Q61.9 378.9 57.9 378.9L43.6 378.9Q39.9 378.9 39.2 375.2Z" fill="#1a1a1a"/>
<circle cx="45.5" cy="383.6" r="2.700" fill="#1a1a1a"/><circle cx="57.6" cy="383.6" r="2.700" fill="#1a1a1a"/></svg>
<svg class="b" style="left:28.00px;top:462.00px;" width="42.00" height="40.00" viewBox="28 462 42 40"><path d="M41.6 467.1H55.2q.8 0 .8 .8V477.1q0 3.6 -3.6 3.6H44.4q-3.6 0 -3.6 -3.6V467.9q0 -.8 .8 -.8z" fill="#1a1a1a"/><rect x="45.0" y="469.9" width="7.2" height="3.0" rx="1.200" fill="#fff"/><path d="M32.9 484.3H46.3q.8 0 .8 .8V494.1q0 3.6 -3.6 3.6H35.7q-3.6 0 -3.6 -3.6V485.1q0 -.8 .8 -.8z" fill="#1a1a1a"/><rect x="36.1" y="487.2" width="7.4" height="2.8" rx="1.200" fill="#fff"/><path d="M51.7 484.3H65.2q.8 0 .8 .8V494.1q0 3.6 -3.6 3.6H54.5q-3.6 0 -3.6 -3.6V485.1q0 -.8 .8 -.8z" fill="#1a1a1a"/><rect x="55.2" y="487.2" width="7.2" height="2.8" rx="1.200" fill="#fff"/></svg>
<svg class="b" style="left:28.00px;top:572.00px;" width="42.00" height="44.00" viewBox="28 572 42 44"><path d="M55.6 579.1q0 -1.6 1.6 -1.6H63.6q2.4 0 2.4 2.4V609.0q0 2.7 -2.7 2.7H34.5q-2.4 0 -2.4 -2.4V590.9L40.8 584.8L42.1 588.2L49.8 584.2L51.1 589.8L55.6 589.8Z" fill="#1a1a1a"/><rect x="38.4" y="596.0" width="4" height="4.200" fill="#fff"/><rect x="47.0" y="596.0" width="4" height="4.200" fill="#fff"/><rect x="55.8" y="596.0" width="4" height="4.200" fill="#fff"/><rect x="38.4" y="603.0" width="4" height="4.200" fill="#fff"/><rect x="47.0" y="603.0" width="4" height="4.200" fill="#fff"/><rect x="55.8" y="603.0" width="4" height="4.200" fill="#fff"/></svg>
<svg class="b" style="left:28.00px;top:690.00px;" width="42.00" height="34.00" viewBox="28 690 42 34"><path d="M36.1 694.9H62.3q3.8 0 3.8 3.8V700.9H32.1V698.9q0 -4.0 4.0 -4.0z" fill="#1a1a1a"/>
<path d="M32.1 705.2H66.0V715.0q0 3.8 -3.8 3.8H35.8q-3.8 0 -3.8 -3.8z" fill="#1a1a1a"/>
<rect x="54.2" y="711.7" width="9.7" height="4.0" rx="2" fill="#fff"/></svg>
<svg class="b" style="left:28.00px;top:800.00px;" width="42.00" height="38.00" viewBox="28 800 42 38"><path d="M34.1 805.0H45.5q2.4 0 3.6 1.9q1.2 -1.9 3.6 -1.9H64.0q2.1 0 2.1 2.1V826.9H32.1V807.2q0 -2.1 2.0 -2.1z" fill="#1a1a1a"/>
<path d="M32.1 828.9H44.8q2.7 0 4.3 1.9q1.6 -1.9 4.3 -1.9H66.2q0 3.5 -3.0 3.5H35.0q-3.0 0 -3.0 -3.5z" fill="#1a1a1a"/>
<rect x="35.2" y="810.1" width="10.1" height="3.300" rx="1.600" fill="#fff"/>
<rect x="35.2" y="815.2" width="10.1" height="3.300" rx="1.600" fill="#fff"/>
<rect x="35.2" y="820.3" width="7.0" height="3.300" rx="1.600" fill="#fff"/>
<path d="M62.3 813.9q-0.8 -1.9 -3.6 -1.9q-3.5 0 -3.5 2.7q0 2.4 3.5 3.0q3.8 0.7 3.8 3.2q0 2.7 -3.8 2.7q-3.0 0 -3.8 -2.0M58.7 810.1V826.0" fill="none" stroke="#fff" stroke-width="1.700" stroke-linecap="round"/></svg>
<svg class="b" style="left:30.00px;top:910.00px;" width="40.00" height="42.00" viewBox="30 910 40 42"><circle cx="42.1" cy="919.3" r="6" fill="#1a1a1a"/><circle cx="56.0" cy="919.3" r="6" fill="#1a1a1a"/>
<path d="M33.8 928.5q0 -1.1 1.1 -1.1H45.8V937.7q0 4.0 2.1 6.0q-2.4 3.0 -6.4 3.0q-7.7 0 -7.7 -9.4z" fill="#1a1a1a"/>
<path d="M47.5 928.5q0 -1.1 1.1 -1.1H63.5q1.1 0 1.1 1.1V937.7q0 9.1 -8.5 9.1q-8.6 0 -8.6 -9.1z" fill="#1a1a1a"/></svg>
<svg class="b" style="left:29.00px;top:1022.00px;" width="40.00" height="40.00" viewBox="29 1022 40 40"><circle cx="49" cy="1042.2" r="12.2" fill="#1a1a1a"/><path d="M44.1 1024.8h9.8v8.2l1.500 3h-12.8l1.500 -3z" fill="#1a1a1a" transform="rotate(0 49 1042.2)"/><path d="M44.1 1024.8h9.8v8.2l1.500 3h-12.8l1.500 -3z" fill="#1a1a1a" transform="rotate(60 49 1042.2)"/><path d="M44.1 1024.8h9.8v8.2l1.500 3h-12.8l1.500 -3z" fill="#1a1a1a" transform="rotate(120 49 1042.2)"/><path d="M44.1 1024.8h9.8v8.2l1.500 3h-12.8l1.500 -3z" fill="#1a1a1a" transform="rotate(180 49 1042.2)"/><path d="M44.1 1024.8h9.8v8.2l1.500 3h-12.8l1.500 -3z" fill="#1a1a1a" transform="rotate(240 49 1042.2)"/><path d="M44.1 1024.8h9.8v8.2l1.500 3h-12.8l1.500 -3z" fill="#1a1a1a" transform="rotate(300 49 1042.2)"/><circle cx="49" cy="1042.2" r="7.2" fill="#fff"/></svg>
<svg class="b" style="left:40.00px;top:1500.00px;" width="34.00" height="30.00" viewBox="40 1500 34 30"><path d="M43 1515.100H68.800M58 1504.300L68.800 1515.100L58 1525.900" fill="none" stroke="#1a1a1a" stroke-width="2.700" stroke-linecap="round" stroke-linejoin="round"/></svg>
<svg class="b" style="left:588.00px;top:109.00px;" width="60.00" height="60.00" viewBox="588 109 60 60"><circle cx="618" cy="139" r="26.700" fill="none" stroke="#335b70" stroke-width="2.900"/><path d="M606.400 139.300H629.800M618.100 127.600V151" stroke="#335b70" stroke-width="3.500" stroke-linecap="round"/></svg>
<svg class="b" style="left:685.00px;top:118.00px;" width="30.00" height="44.00" viewBox="685 118 30 44"><path d="M708.300 123.600L692.400 138.900L708.300 154.200" fill="none" stroke="#335b70" stroke-width="3.300" stroke-linecap="round" stroke-linejoin="miter"/></svg>
<svg class="b" style="left:264.00px;top:299.00px;" width="40.00" height="38.00" viewBox="264 299 40 38"><circle cx="280.600" cy="315" r="11.100" fill="none" stroke="#111" stroke-width="3.400"/><path d="M289 323.500L297.300 331.700" stroke="#111" stroke-width="3.400" stroke-linecap="round"/></svg>
<svg class="b" style="left:1368.00px;top:269.00px;" width="38.00" height="38.00" viewBox="1368 269 38 38"><circle cx="1386.700" cy="287.600" r="17" fill="#b2b2b2"/><path d="M1380.300 281.200L1393.100 294M1393.100 281.200L1380.300 294" stroke="#fff" stroke-width="3" stroke-linecap="round"/></svg>
<svg class="b" style="left:1438.00px;top:268.00px;" width="38.00" height="38.00" viewBox="1438 268 38 38"><g transform="translate(1457.300 286.500)" fill="none" stroke="#335b70" stroke-width="3" stroke-linecap="round"><g transform="rotate(0)"><path d="M-14 -10.900A3.100 3.100 0 0 1 -10.900 -14"/><path d="M-6.100 -14H-2.600M2.600 -14H6.100"/></g><g transform="rotate(90)"><path d="M-14 -10.900A3.100 3.100 0 0 1 -10.900 -14"/><path d="M-6.100 -14H-2.600M2.600 -14H6.100"/></g><g transform="rotate(180)"><path d="M-14 -10.900A3.100 3.100 0 0 1 -10.900 -14"/><path d="M-6.100 -14H-2.600M2.600 -14H6.100"/></g><g transform="rotate(270)"><path d="M-14 -10.900A3.100 3.100 0 0 1 -10.900 -14"/><path d="M-6.100 -14H-2.600M2.600 -14H6.100"/></g></g>
<circle cx="1455.700" cy="285.200" r="5.600" fill="none" stroke="#335b70" stroke-width="3"/><path d="M1459.900 289.400L1464.300 293.600" stroke="#335b70" stroke-width="3.200" stroke-linecap="round"/></svg>
<svg class="b" style="left:2588.00px;top:124.00px;" width="44.00" height="44.00" viewBox="2588 124 44 44"><rect x="2599.800" y="128.900" width="27.700" height="28.300" rx="5" fill="#335b70"/>
<rect x="2591.700" y="133.300" width="31.700" height="32" rx="6.200" fill="#f2f5f6"/>
<rect x="2592.900" y="134.500" width="29.300" height="29.600" rx="5" fill="#335b70"/></svg>
<svg class="b" style="left:2672px;top:126px" width="16" height="42" viewBox="2672 126 16 42"><circle cx="2680.300" cy="132.900" r="3.700" fill="#1c4560"/><circle cx="2680.300" cy="146.700" r="3.700" fill="#1c4560"/><circle cx="2680.300" cy="160.500" r="3.700" fill="#1c4560"/></svg>
<svg class="b" style="left:2784.00px;top:132.00px;" width="44.00" height="30.00" viewBox="2784 132 44 30"><path d="M2791.300 140.200L2806.300 154.900L2821.300 140.200" fill="none" stroke="#335b70" stroke-width="3.200" stroke-linecap="round" stroke-linejoin="miter"/></svg>
<svg class="b" style="left:2868.00px;top:125.00px;" width="44.00" height="44.00" viewBox="2868 125 44 44"><path d="M2875.100 131.600L2905.300 161.800M2905.300 131.600L2875.100 161.800" stroke="#335b70" stroke-width="3.200" stroke-linecap="round"/></svg>
<svg class="b" style="left:2186.00px;top:819.00px;" width="30.00" height="30.00" viewBox="2186 819 30 30"><path d="M2192.800 825.800L2208.700 841.700M2208.700 825.800L2192.800 841.700" stroke="#8da4b1" stroke-width="3.700" stroke-linecap="round"/></svg>
</body></html>
